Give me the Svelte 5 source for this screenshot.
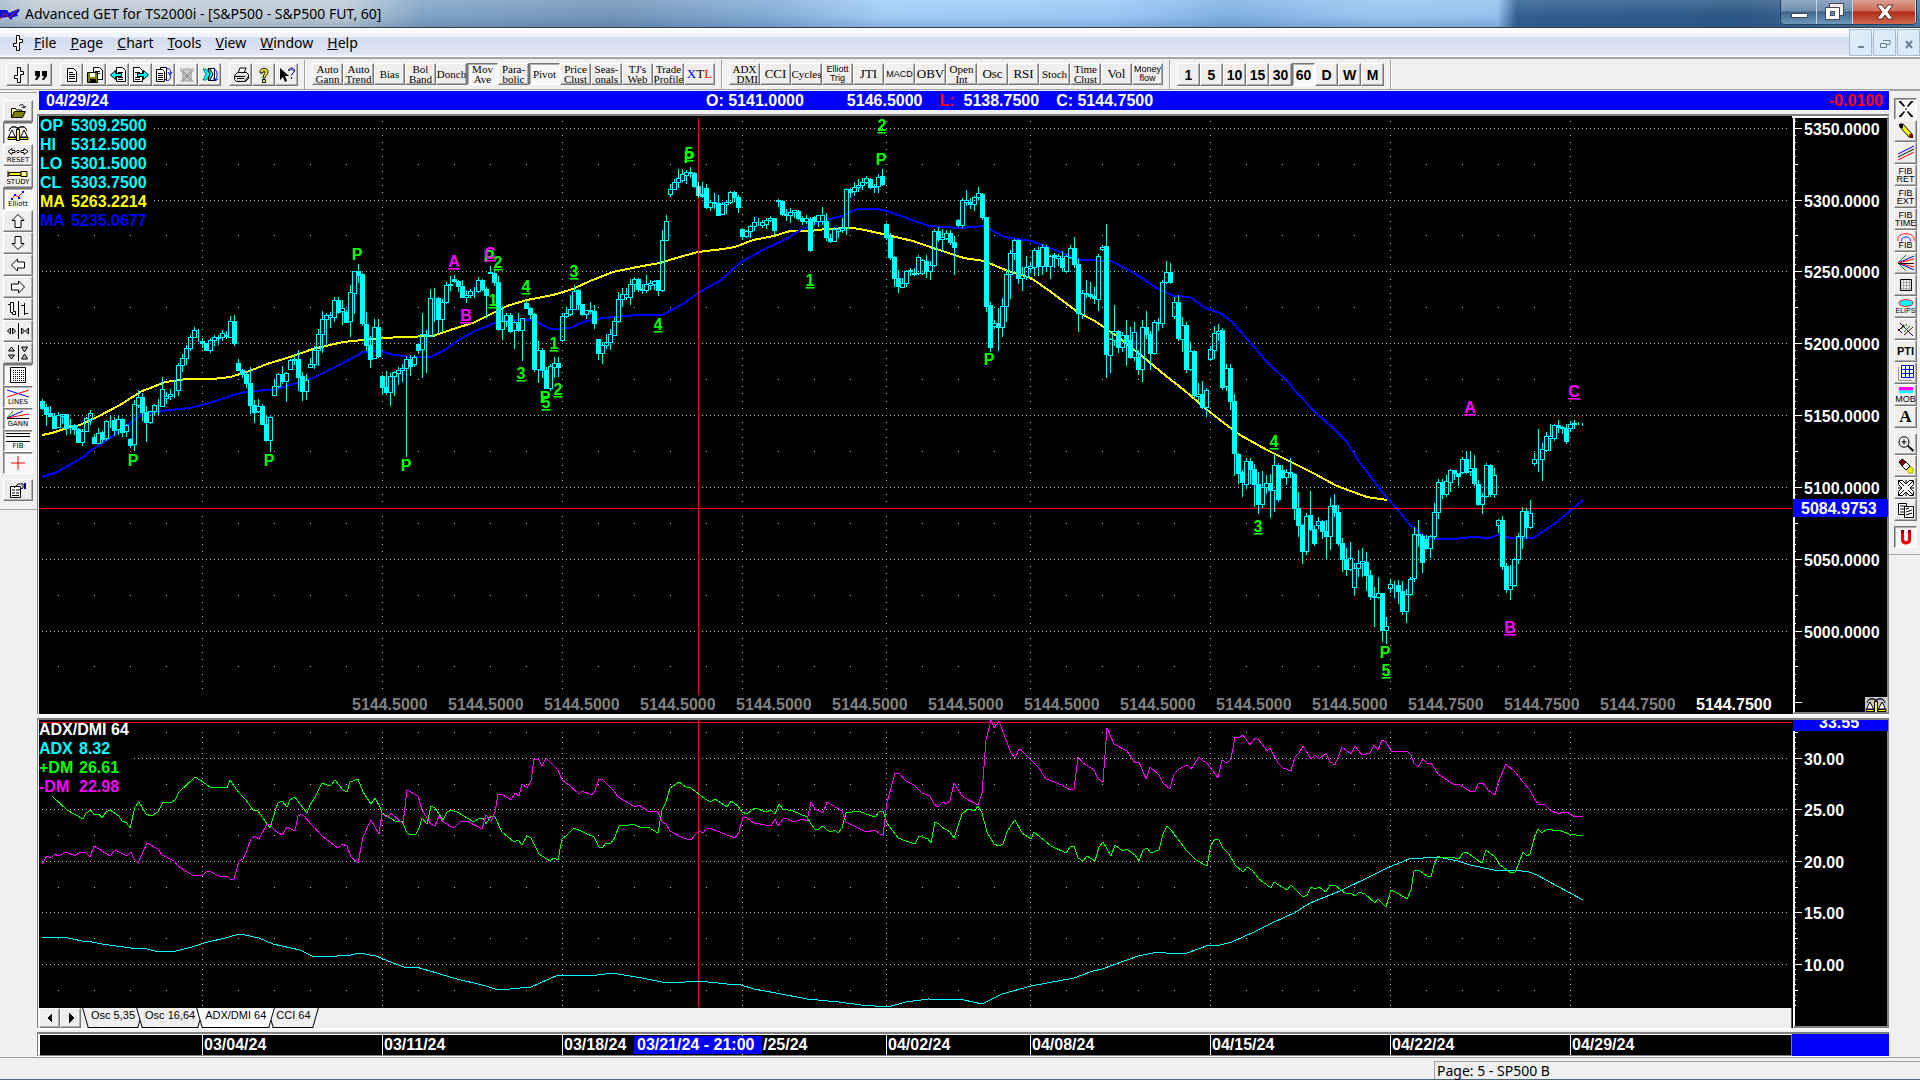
<script lang="ts">
  type Shape = [d: string, fill?: string, stroke?: string];
  type Tool = { id: string; text?: string; icon?: string; pressed?: boolean; sans?: boolean };

  const menus = ['File', 'Page', 'Chart', 'Tools', 'View', 'Window', 'Help'];

  const fileTools: Tool[][] = [
    [{ id: 'Bars', icon: 'bars' }, { id: 'Quotes', icon: 'quote' }],
    [
      { id: 'New page', icon: 'doc' },
      { id: 'Save page', icon: 'save' },
      { id: 'Previous page', icon: 'prev' },
      { id: 'Next page', icon: 'next' },
      { id: 'Cycle pages', icon: 'cycle' },
      { id: 'Delete page', icon: 'remove' },
      { id: 'Refresh pages', icon: 'refresh' }
    ],
    [{ id: 'Print', icon: 'print' }, { id: 'About', icon: 'about' }, { id: 'Context help', icon: 'pointer' }]
  ];

  const studies: Tool[] = [
    { id: 'Auto Gann', text: 'Auto\nGann' },
    { id: 'Auto Trend', text: 'Auto\nTrend' },
    { id: 'Bias', text: 'Bias' },
    { id: 'Bol Band', text: 'Bol\nBand' },
    { id: 'Donch', text: 'Donch' },
    { id: 'Mov Ave', text: 'Mov\nAve', pressed: true },
    { id: 'Parabolic', text: 'Para-\nbolic' },
    { id: 'Pivot', text: 'Pivot', pressed: true },
    { id: 'Price Clust', text: 'Price\nClust' },
    { id: 'Seasonals', text: 'Seas-\nonals' },
    { id: 'TJs Web', text: "TJ's\nWeb" },
    { id: 'Trade Profile', text: 'Trade\nProfile' },
    { id: 'XTL', text: 'XTL' }
  ];

  const indicators: Tool[] = [
    { id: 'ADX DMI', text: 'ADX\n  DMI' },
    { id: 'CCI', text: 'CCI' },
    { id: 'Cycles', text: 'Cycles' },
    { id: 'Elliott Trig', text: 'Elliott\nTrig', sans: true },
    { id: 'JTI', text: 'JTI' },
    { id: 'MACD', text: 'MACD', sans: true },
    { id: 'OBV', text: 'OBV' },
    { id: 'Open Int', text: 'Open\nInt' },
    { id: 'Osc', text: 'Osc' },
    { id: 'RSI', text: 'RSI' },
    { id: 'Stoch', text: 'Stoch' },
    { id: 'Time Clust', text: 'Time\nClust' },
    { id: 'Vol', text: 'Vol' },
    { id: 'Money flow', text: 'Money\nflow', sans: true }
  ];

  const periods = ['1', '5', '10', '15', '30', '60', 'D', 'W', 'M'];

  const leftTools: Tool[] = [
    { id: 'Open', icon: 'open' },
    { id: 'Scales', icon: 'scales', pressed: true },
    { id: 'Reset', icon: 'reset', text: 'RESET' },
    { id: 'Study', icon: 'study', text: 'STUDY' },
    { id: 'Elliott', icon: 'elliott', text: 'Elliott', pressed: true },
    { id: 'Up', icon: 'up' },
    { id: 'Down', icon: 'down' },
    { id: 'Left', icon: 'left' },
    { id: 'Right', icon: 'right' },
    { id: 'Bar style', icon: 'barstyle' },
    { id: 'Stretch time', icon: 'stretch' },
    { id: 'Stretch price', icon: 'squash' },
    { id: 'Grid', icon: 'dots', pressed: true },
    { id: 'Lines', icon: 'lines', text: 'LINES', pressed: true },
    { id: 'Gann', icon: 'gann', text: 'GANN', pressed: true },
    { id: 'Fib', icon: 'fib', text: 'FIB', pressed: true },
    { id: 'Crosshair', icon: 'cross', pressed: true },
    { id: 'Properties', icon: 'props' }
  ];

  const rightTools: Tool[][] = [
    [
      { id: 'Cursor', icon: 'x', pressed: true },
      { id: 'Pencil', icon: 'pencil' },
      { id: 'Channels', icon: 'channel' },
      { id: 'Fib retracement', text: 'FIB\nRET' },
      { id: 'Fib extension', text: 'FIB\nEXT' },
      { id: 'Fib time', text: 'FIB\nTIME' },
      { id: 'Fib arcs', icon: 'arcs', text: 'FIB' },
      { id: 'Gann fan', icon: 'fan' },
      { id: 'Gann box', icon: 'box' },
      { id: 'Ellipse', icon: 'ellipse', text: 'ELIPS' },
      { id: 'Pitchfork', icon: 'fork' },
      { id: 'PTI', text: 'PTI' },
      { id: 'Blue grid', icon: 'bluegrid' },
      { id: 'MOB', icon: 'mob', text: 'MOB' },
      { id: 'Text', text: 'A' }
    ],
    [
      { id: 'Zoom', icon: 'zoom' },
      { id: 'Eraser', icon: 'eraser' },
      { id: 'Erase all', icon: 'eraseall' },
      { id: 'Copy', icon: 'copy' }
    ],
    [{ id: 'Magnet', icon: 'magnet', pressed: true }]
  ];

  const K = '#000';
  const N = 'none';
  const page = 'M3.5 1.5h6l3 3v10h-9z';
  const dotRow = 'h1m1 0'.repeat(6);
  // shapes on a 16 x 16 box, or 26 x 9 where the button also has a caption
  const icons: Record<string, Shape[]> = {
    bars: [['M7.5 .5h3v4h3v3h-3v8h-3v-4h-3v-3h3z', '#fff', K]],
    quote: [['M2 4h5v5l-3 4H2l2-4H2zM9 4h5v5l-3 4H9l2-4H9z', K]],
    doc: [[page, '#fff', K], ['M5 5.5h4M5 7.5h6M5 9.5h6M5 11.5h6', N, K]],
    save: [['M6.5 .5h6l3 3v9h-9z', '#fff', K], ['M8 4.5h5M8 6.5h5', N, K], ['M.5 5.5h10v10H.5z', '#808000', K], ['M3 6h5v4H3z', '#fff'], ['M3 12h6v3H3z', K]],
    prev: [['M6.5 .5h6l3 3v11h-9z', '#fff', K], ['M8 5.5h5M8 10.5h5M8 12.5h5', N, K], ['M.5 8l5-4.500v3h6v3h-6v3z', '#0ff', K]],
    next: [['M.5 .5h6l3 3v11h-9z', '#fff', K], ['M2 5.5h5M2 10.5h5M2 12.5h5', N, K], ['M15.500 8l-5-4.500v3h-6v3h6v3z', '#0ff', K]],
    cycle: [['M4.500 .5h6v12h-6z', '#fff', K], ['M.5 2.500h6l2 2v10h-8z', '#fff', K], ['M2 6.500h5M2 8.500h5M2 10.500h5M2 12.500h5', N, K], ['M11 1.500c4 0 4 3 3 6 1 5 0 6-4 6M12 5l2 3 2-3', N, '#00f']],
    remove: [['M4 2h8v12H4z', '#ccc', '#999'], ['M1 1l14 14M15 1L1 15M1 3l12 12M15 3L3 15', N, '#999']],
    refresh: [['M6.500 1.500h6v12h-6z', '#fff', K], ['M1 2h3l4 5-4 6H1l3-6z', '#0ff', '#008080'], ['M6 2h2l3 5-3 6H6l2-6z', '#0ff', K], ['M12 1.500c4 3 4 8 1 12M11 11l2 3 3-2', N, '#00f']],
    print: [['M5 6l2-5h6l-2 5z', '#fff', K], ['M1.500 8.500l3-3h9l2 2v4l-3 3h-9l-2-2z', '#ddd', K], ['M2 9.500h10M4 11.500h7M12 14l3-4', N, K]],
    about: [['M4 5c0-5 8-5 8 0 0 3-3 3-3 6H7c0-3 2-4 2-6 0-2-2-2-2 0v1H4zM6.500 12.500h3v3h-3z', '#ff0', K]],
    pointer: [['M1 1v12l3-3 2 5 2-1-2-5h4z', K], ['M9.500 4c0-4 6-4 6 0 0 2-3 2-3 4.500M12.500 10v2M10.500 4c0-2 4-2 4 0', N, '#000080']],
    open: [['M1.500 14V5.500h4l1 1.500h5v2', '#ff8', K], ['M1.500 14.500l3-6h11l-3 6z', '#808000', K], ['M9 3c2-2 4-2 5 0v2M12 4l2 1 2-2', N, K]],
    scales: [['M-1 6c1-5 6-5 9-2 3-3 8-3 9 2M0 4c2-3 5-3 8-1 3-2 6-2 8 1', N, K], ['M6.500 4.500h3v11h-3z', '#ff0', K], ['M2 5l-3.500 7h7zM14 5l-3.500 7h7z', '#fff', K], ['M-2 12.500h8v2h-8zM10 12.500h8v2h-8z', '#ff0', K]],
    reset: [['M3 4.500l4-3v2h3v2H7v2zM23 4.500l-4-3v2h-3v2h3v2z', '#fff', K], ['M11.500 4.500l1.500-1.500 1.500 1.500L13 6z', '#fff', K]],
    study: [['M4 3.500h12v3H4z', '#ff0', K], ['M16 2.500h6v5h-6zM3 2v6', '#ff8', K]],
    elliott: [['M7 8l3-4 3 2 5-5', N, '#f00'], ['M6 7h2v2H6zM9 3h2v2H9zM13 6h2v2h-2zM17 0h2v2h-2z', '#00f']],
    up: [['M8 1.500l6 6h-3v7H5v-7H2z', '#fff', K]],
    down: [['M8 14.500l6-6h-3v-7H5v7H2z', '#fff', K]],
    left: [['M1.500 8l6-6v3h7v6h-7v3z', '#fff', K]],
    right: [['M14.500 8l-6-6v3h-7v6h7v3z', '#fff', K]],
    barstyle: [['M-1.500 3.500h2v-2h3v9h2v3h-3v-2h-2v-7z', '#fff', K], ['M8.500 0v16M14.500 2v12M11 4.500h3M15 12.500h3', N, K]],
    stretch: [['M8.500 0v16', N, K], ['M-2.500 8l3-3v6zM5.500 8l-3-3v6zM11.500 5l3 3-3 3zM18.500 5l-3 3 3 3z', '#bbb', K]],
    squash: [['M8.500 0v16', N, K], ['M-1.500 6l3-4 3 4zM-1.500 10l3 4 3-4zM11.500 2h6l-3 5zM11.500 14h6l-3-5z', '#bbb', K]],
    dots: [['M.5 .5h15v15H.5z', '#fff', K], [[3, 5, 7, 9, 11, 13].map((y) => `M3 ${y}.5${dotRow}`).join(''), N, K]],
    lines: [['M2 1l22 7', N, '#00f'], ['M2 8L24 1', N, '#f00']],
    gann: [['M2 7L8 0', N, '#080'], ['M2 7L18 0', N, '#00f'], ['M2 7l22-4', N, '#f00'], ['M2 7.500h22', N, K]],
    fib: [['M1 .5h24M1 3.500h24M1 8.500h24', N, K]],
    cross: [['M8 1v14M1 8h14', N, '#f00']],
    props: [['M.5 4.500h10v11H.5z', '#fff', K], ['M2 8h3M2 11h3M6 8h3M6 11h3M2 13.500h7M4 6l4-4h5v4l-4 2', N, K], ['M14 1h2v6h-2z', '#000080']],
    x: [['M1 0h2l4 5-1 1-5-5zM15 0h-2L9 5l1 1 5-5zM1 16h2l4-5-1-1-5 5zM15 16h-2l-4-5 1-1 5 5zM7 7.500h2v1H7z', K]],
    pencil: [['M2 1h3l9 10v3h-3L2 4z', '#ff0', K], ['M1 1h4v4H2z', K], ['M11 11h4v4h-3z', '#800000']],
    channel: [['M0 9L16 1', N, '#00f'], ['M0 12L16 4', N, K], ['M0 15L16 7', N, '#f00']],
    arcs: [['M4 9c-3-11 21-11 18 0', N, '#f00'], ['M8 9c-1-6 11-6 10 0', N, '#00f']],
    fan: [['M0 8L8 0M0 8l8 8', N, '#080'], ['M0 8L16 1M0 8l16 7', N, '#00f'], ['M0 8l16-4M0 8l16 4', N, '#f00'], ['M0 8.500h16', N, K]],
    box: [['M2.500 2.500h11v11h-11z', '#eee', K], ['M5.500 3v10M8.500 3v10M11.500 3v10M3 5.500h10M3 8.500h10M3 11.500h10', N, '#aaa']],
    ellipse: [['M5 4.500c0-5 16-5 16 0s-16 5-16 0', '#0ff', '#f00']],
    fork: [['M2 2l13 13M0 8l4 4', N, '#000080'], ['M3 8l6-5M6 11l6-6', N, '#080'], ['M0 10l6-6M6 14l9-8', N, '#800000']],
    bluegrid: [['M3.500 .5h12v12h-12zM7.500 1v12M11.500 1v12M3 4.500h12M3 8.500h12', '#fff', '#00f'], ['M.5 2v13.500H14', N, '#999']],
    mob: [['M5 0h16v4H5z', '#f0f'], ['M5 4h16v3H5z', '#0ff']],
    zoom: [['M1 6c0-7 10-7 10 0s-10 7-10 0M3.500 6h5M6 3.500v5', N, K], ['M9 10l1-1 6 5-1 2z', K]],
    eraser: [['M1 4l3-3 4 3-4 4z', '#800000', K], ['M4 8l4-4 4 4-4 4z', '#fff', K], ['M9 12l4-4 2 3v4h-4z', '#ff0', '#aa0']],
    eraseall: [['M.5 .5h4l3.500 3.500 3.500-3.500h4v4L12 8l3.500 3.500v4h-4L8 12l-3.500 3.500h-4v-4L4 8 .5 4.500z', '#fff', K], ['M1 1l5 5M15 1l-5 5M1 15l5-5M15 15l-5-5M0 8h3M13 8h3M8 0v3M8 13v3', N, K]],
    copy: [['M.5 1.500h8v11h-8z', '#fff', K], ['M2 4h5M2 7h4M2 10h4', N, K], ['M6.500 4.500h9v11h-9z', '#fff', K], ['M8 7l3-1M8 10l6-2M8 13l6-2', N, K]],
    magnet: [['M3 1h3v9c0 3 4 3 4 0V1h3v10c0 6-10 6-10 0z', '#e00'], ['M3 1h3v3H3zM10 1h3v3h-3z', '#800000']]
  };

  const ohlc = [
    ['OP', '5309.2500', 'cyan'],
    ['HI', '5312.5000', 'cyan'],
    ['LO', '5301.5000', 'cyan'],
    ['CL', '5303.7500', 'cyan'],
    ['MA', '5263.2214', 'yellow'],
    ['MA', '5235.0677', 'blue']
  ];

  const tape = [...Array(11).fill('5144.5000'), ...Array(4).fill('5144.7500')];

  // high, open, close, low as screen rows, one bar every 4px
  const bars = `
    399,401,408,409 404,407,414,425 406,413,416,416 413,416,428,428 412,427,415,427 414,416,414,423 414,414,428,434
    419,427,425,433 424,425,429,434 428,429,442,442 429,442,431,445 417,431,418,431 410,419,413,424 434,437,443,443
    428,443,433,443 431,432,439,442 420,438,421,440 415,421,421,427 417,420,430,435 415,429,419,434 418,419,432,436
    424,431,425,436 438,439,445,447 400,444,404,450 390,405,397,407 393,397,412,420 406,412,422,441 411,422,411,423
    404,411,405,414 399,405,405,414 377,406,389,406 392,398,396,403 389,396,394,399 380,394,394,397 363,390,365,395
    354,365,358,371 345,358,348,364 335,348,337,350 327,337,330,337 329,330,330,341 338,341,343,347 343,343,350,350
    338,350,340,352 335,340,337,345 335,338,337,344 330,337,333,340 331,336,335,338 316,337,321,337 315,321,343,345
    359,363,370,370 369,370,374,377 372,374,383,387 367,383,405,413 400,405,412,422 399,411,406,412 404,406,424,424
    415,424,440,441 415,440,417,451 380,395,386,395 373,386,374,387 366,374,381,383 372,381,373,401 359,369,360,369
    355,360,359,364 350,359,377,390 372,376,391,400 374,391,380,399 358,367,364,367 346,364,350,368 329,350,334,365
    311,334,319,352 313,319,315,345 312,317,315,327 297,317,300,321 297,300,312,313 300,311,308,324 310,312,322,322
    285,321,292,336 271,293,271,313 264,271,275,282 273,274,323,325 312,324,345,350 336,345,359,367 319,358,327,358
    319,327,356,357 375,376,387,394 371,387,392,394 373,392,376,405 371,376,372,395 367,373,370,384 364,370,368,381
    356,368,359,456 355,359,366,375 355,364,357,366 343,344,350,353 313,349,334,377 330,335,334,372 289,336,298,336
    288,298,298,321 297,298,319,332 299,319,302,331 282,302,285,303 276,285,284,290 275,279,281,282 280,281,286,291
    280,286,297,297 291,297,295,302 289,295,291,297 287,291,291,297 277,291,280,292 279,280,289,290 287,289,295,317
    266,272,273,273 269,273,282,285 276,282,329,330 306,329,321,339 313,321,315,326 313,315,331,332 321,330,322,348
    313,322,330,331 318,330,318,360 300,303,308,308 307,308,314,318 313,314,369,371 341,369,350,382 348,350,370,377
    367,370,388,388 364,388,366,390 357,367,363,377 357,363,367,376 313,340,316,341 307,316,313,317 295,314,309,315
    285,309,291,309 289,290,304,309 304,304,314,315 310,314,310,318 302,311,310,313 305,311,323,328 339,339,353,359
    342,353,345,363 334,345,342,348 329,342,334,349 317,335,321,335 292,321,299,322 288,299,294,306 288,297,294,299
    279,297,284,304 277,284,279,291 278,279,289,291 284,290,289,293 275,290,284,292 280,285,283,289 280,284,281,289
    280,280,290,295 230,290,240,291 215,240,221,240 184,194,189,196 179,189,182,189 169,182,178,187 169,180,174,181
    170,175,172,183 167,173,172,177 172,173,186,187 182,186,195,197 182,194,196,197 184,188,207,208 200,207,202,210
    193,202,203,208 195,203,215,215 202,214,204,214 200,204,202,213 191,202,192,203 191,192,197,201 195,197,207,212
    228,229,236,239 230,236,231,237 225,231,226,237 217,226,222,230 218,222,222,225 220,225,222,227 218,224,220,228
    216,220,218,221 218,218,230,234 199,200,201,206 200,201,214,215 209,215,214,220 208,215,212,222 210,212,210,217
    210,211,218,219 216,218,221,224 215,221,218,223 217,219,250,251 216,217,221,224 215,221,215,226 207,221,215,224
    213,221,237,240 234,238,241,242 227,241,229,241 227,231,229,237 218,230,228,232 188,228,189,234 188,189,192,197
    182,191,187,195 179,187,185,191 178,185,182,189 176,182,178,183 178,179,187,188 184,187,186,192 174,186,177,192
    169,176,184,185 223,224,237,239 233,237,257,259 256,257,278,286 270,278,286,292 278,287,283,287 270,283,271,286
    268,271,270,275 268,274,273,275 255,273,257,274 259,273,260,274 255,261,271,277 261,271,265,279 229,265,231,266
    227,231,239,241 229,239,237,251 230,238,233,239 230,233,242,244 236,242,247,274 219,220,225,226 198,225,200,227
    190,202,200,205 198,202,204,208 196,204,197,210 187,197,193,199 193,194,217,219 217,217,306,311 302,305,347,351
    320,326,323,328 308,323,327,350 298,327,306,336 270,306,274,321 250,274,253,298 239,253,240,259 239,240,278,283
    267,278,274,290 256,276,267,279 262,268,266,272 248,267,250,275 247,250,266,275 244,266,247,274 245,247,266,271
    255,266,256,278 253,255,257,267 254,258,256,265 251,258,267,271 255,271,256,272 245,257,248,258 237,248,264,267
    259,264,313,331 290,314,293,318 280,293,294,297 282,294,296,298 287,296,298,303 254,299,256,310 245,249,247,250
    224,246,354,377 338,355,339,372 305,340,331,345 330,331,347,352 332,347,335,351 320,335,341,365 327,340,357,358
    322,357,332,360 350,357,369,374 320,369,327,381 311,327,334,338 331,334,353,369 320,353,322,354 318,323,322,330
    280,323,282,327 261,282,272,283 263,272,282,283 297,316,302,318 295,302,338,340 317,339,325,351 322,325,369,372
    342,369,351,370 350,351,395,398 383,396,394,401 381,394,407,408 388,407,390,416 346,359,349,360 326,350,333,358
    324,333,331,340 328,330,387,389 364,386,368,390 364,368,401,409 394,401,453,475 453,454,473,483 470,472,482,496
    458,484,461,488 458,461,469,483 464,469,484,506 472,484,504,513 471,504,487,507 475,487,483,493 474,483,490,517
    454,490,465,511 463,465,499,501 465,470,477,478 469,477,472,484 458,472,473,477 473,474,508,519 492,508,525,536
    524,525,551,563 513,551,516,554 491,515,529,530 525,529,543,545 517,525,521,528 520,521,531,538 520,531,536,558
    498,536,506,549 494,505,512,516 505,512,543,545 538,543,559,571 548,559,569,575 542,569,558,570 563,587,568,594
    550,568,563,576 548,563,561,576 552,562,575,590 570,575,596,599 587,597,596,626 577,597,593,598 593,593,630,641
    617,630,626,643 579,588,584,592 581,584,584,597 580,585,591,603 581,591,611,614 589,611,594,622 577,594,579,595
    527,578,534,581 520,535,534,546 534,536,562,572 535,539,548,549 535,548,536,557 503,536,512,538 479,512,482,518
    479,482,494,498 475,494,481,496 469,482,470,491 470,470,473,479 473,473,476,485 457,472,459,473 451,459,472,473
    451,471,468,475 455,468,483,485 480,484,504,505 493,504,496,513 463,496,465,497 464,465,494,496 468,494,475,497
    519,525,520,532 516,520,566,569 563,566,589,592 565,589,585,599 558,585,559,586 533,559,536,563 507,536,511,548
    508,511,527,538 500,527,513,528 453,463,459,465 429,459,459,471 443,459,449,480 432,450,436,451 424,438,436,450
    424,438,425,440 420,425,427,432 426,427,428,433 424,428,441,443 421,428,424,431 420,424,423,428 422,423,423,424
    423,423,423,425`
    .trim()
    .split(/\s+/)
    .map((row, i) => {
      const [high, open, close, low] = row.split(',').map(Number);
      return { x: 42 + 4 * i, high, low, top: Math.min(open, close), bottom: Math.max(open, close), down: close > open };
    });

  const slowMa =
    '42,435 52,433 67,428 80,425 97,417 120,405 142,391 153,387 165,382 187,379 213,379 230,377 247,372 267,364 290,357 313,349 343,342 363,340 383,338 403,337 433,336 453,329 473,323 487,316 507,306 527,300 553,295 573,289 590,281 613,272 637,267 660,263 676,258 698,252 723,249 735,247 753,240 774,236 790,231 810,231 826,229 853,228 865,230 887,235 913,241 933,248 964,258 984,261 1008,271 1031,278 1051,292 1079,313 1095,321 1118,337 1142,356 1166,376 1184,390 1205,408 1220,420 1240,435 1267,450 1297,465 1313,473 1337,486 1367,497 1387,500';
  const fastMa =
    '42,477 57,472 73,463 85,456 90,451 110,438 130,423 140,415 160,411 190,408 213,402 233,395 250,391 273,390 290,385 313,378 343,363 363,352 380,351 390,354 410,357 430,357 443,351 460,339 477,330 488,326 497,322 510,320 533,320 550,329 570,328 583,322 603,318 637,315 662,315 683,304 698,293 721,280 741,262 763,250 786,239 802,229 826,220 842,216 857,209 877,209 887,211 909,219 929,226 960,228 984,226 1004,237 1031,241 1063,253 1081,260 1111,261 1134,273 1158,289 1174,296 1190,297 1205,308 1222,314 1233,323 1267,362 1290,384 1295,391 1317,414 1333,428 1347,442 1360,463 1387,498 1398,510 1410,525 1425,537 1433,539 1453,539 1472,537 1490,538 1497,535 1510,538 1533,538 1553,525 1570,511 1583,500';
  const plusDm =
    '52,796 67,810 83,819 86,813 91,810 94,815 99,814 102,818 106,812 110,810 119,816 122,821 127,823 130,828 135,807 139,802 146,814 151,816 158,812 163,802 171,803 175,800 179,792 195,777 200,780 210,787 219,788 222,787 227,788 230,780 239,793 246,800 253,810 258,811 270,828 276,808 278,803 282,801 287,807 290,800 295,797 307,813 310,805 314,799 322,783 327,785 331,785 335,780 343,790 347,792 350,782 358,779 363,792 371,804 375,798 380,807 382,813 395,821 402,821 407,833 411,835 416,834 419,828 422,818 427,824 431,806 435,808 443,820 447,812 451,810 457,812 474,822 479,818 483,818 486,824 491,816 495,817 502,832 514,842 518,840 522,845 527,836 531,838 539,854 550,861 554,858 558,860 562,839 567,835 574,828 594,837 599,847 602,848 606,843 611,843 615,837 619,826 623,825 627,826 631,824 635,825 642,828 648,827 658,833 662,810 666,802 670,788 679,782 686,787 691,788 705,799 711,802 715,799 727,807 731,801 738,806 742,812 747,814 755,808 766,812 771,810 775,814 779,804 783,809 793,811 807,817 811,824 815,829 819,829 823,826 827,830 831,832 835,830 838,833 842,828 846,813 859,811 866,814 875,817 879,812 883,811 887,823 898,838 906,841 915,844 919,836 928,839 931,843 935,822 939,824 942,827 950,832 954,838 958,826 962,814 968,809 975,811 978,806 982,813 987,832 994,844 999,846 1003,844 1007,832 1011,825 1015,820 1022,833 1031,839 1034,832 1051,846 1066,853 1070,847 1074,846 1078,858 1083,861 1087,856 1095,861 1099,847 1103,842 1111,856 1115,845 1123,851 1127,849 1135,855 1139,861 1143,850 1147,848 1151,853 1159,850 1163,834 1167,826 1171,830 1187,851 1196,860 1207,866 1211,845 1215,839 1219,840 1223,848 1229,854 1235,865 1243,872 1247,867 1252,870 1259,879 1271,888 1274,882 1279,885 1287,890 1291,885 1303,897 1307,895 1311,887 1315,889 1319,887 1326,892 1330,885 1335,885 1346,894 1351,893 1355,896 1359,892 1365,894 1375,903 1378,899 1386,907 1391,890 1399,894 1407,899 1411,890 1414,871 1419,870 1427,876 1431,877 1434,865 1438,856 1442,858 1451,857 1459,859 1463,853 1466,852 1482,863 1486,850 1495,857 1500,865 1511,873 1515,872 1519,863 1523,852 1527,856 1530,854 1535,836 1538,829 1542,833 1546,830 1550,829 1555,831 1559,830 1569,834 1583,836';
  const minusDm =
    '42,864 47,856 51,858 55,854 58,856 66,852 75,856 80,852 85,852 90,857 94,846 110,856 115,850 127,856 131,852 134,859 138,863 147,843 158,849 162,855 174,861 178,866 187,872 195,876 203,875 207,871 211,872 219,876 227,876 231,880 234,879 239,861 243,859 246,853 251,839 255,836 259,839 267,824 271,825 274,830 282,835 287,827 295,831 298,816 302,814 322,836 338,848 342,844 347,846 351,857 358,863 363,837 371,820 379,834 382,814 387,817 391,813 403,824 407,790 418,796 422,810 431,824 435,826 439,816 443,822 454,828 461,821 467,821 482,829 486,815 491,821 495,812 498,794 503,795 511,800 515,793 519,796 522,784 527,788 531,781 534,759 539,760 542,766 546,758 558,770 562,780 569,785 579,794 582,791 591,795 594,793 599,779 603,780 614,791 618,797 635,807 639,805 648,811 658,812 662,822 666,824 670,831 683,838 691,840 695,835 699,831 703,833 707,828 712,829 735,838 739,832 743,817 747,818 754,823 771,826 775,819 778,826 783,819 786,818 794,822 803,819 807,821 811,802 815,809 823,813 827,802 842,811 846,822 854,826 866,832 875,830 883,836 887,802 891,788 895,773 899,773 906,781 914,785 922,793 930,796 934,804 938,807 943,802 946,804 950,801 954,783 963,797 978,805 982,793 986,740 991,720 994,728 999,721 1011,753 1015,758 1019,749 1022,751 1039,768 1046,779 1062,785 1070,790 1074,789 1078,757 1083,763 1094,770 1098,779 1103,782 1107,728 1114,744 1127,751 1135,763 1139,762 1146,779 1150,767 1159,775 1163,783 1170,789 1174,774 1179,769 1187,765 1191,769 1199,757 1203,761 1207,763 1218,778 1222,760 1227,763 1231,759 1235,737 1239,738 1243,735 1250,745 1255,738 1259,740 1267,751 1270,748 1278,763 1283,768 1291,771 1295,757 1299,753 1303,746 1311,759 1315,755 1319,759 1326,753 1330,762 1335,765 1342,747 1351,754 1355,746 1362,755 1370,753 1374,745 1378,750 1382,740 1386,742 1391,751 1407,751 1411,755 1414,763 1418,767 1423,759 1427,763 1431,763 1438,774 1453,784 1460,785 1471,792 1475,791 1478,784 1483,783 1488,790 1495,795 1498,783 1506,764 1515,772 1523,782 1530,790 1534,798 1538,804 1544,804 1550,810 1559,814 1562,812 1567,812 1573,816 1583,816';
  const adx =
    '42,937 63,937 73,939 82,941 92,942 102,944 116,946 131,948 147,949 155,951 176,951 192,947 204,943 229,937 239,934 245,935 259,938 273,944 300,950 312,956 337,956 351,955 359,953 376,956 388,961 404,967 416,967 437,973 453,978 486,986 495,989 510,989 531,987 558,975 590,976 612,973 642,978 662,982 685,982 699,981 727,984 741,985 754,989 776,993 807,999 839,1002 861,1005 888,1007 906,1002 928,999 964,1000 982,1004 1002,994 1031,986 1074,978 1093,971 1102,969 1138,956 1158,952 1174,954 1187,953 1209,945 1220,945 1232,942 1254,932 1272,923 1294,913 1310,903 1340,891 1371,876 1387,868 1409,859 1438,857 1458,861 1470,865 1494,870 1515,870 1529,872 1537,875 1557,886 1583,900';

  // pivots (P), wave counts and corrective letters
  const marks: [string, number, number][] = [
    ['P', 133, 466], ['P', 269, 466], ['P', 357, 260], ['P', 406, 471], ['A', 454, 267], ['B', 466, 321],
    ['P', 489, 262], ['C', 490, 259], ['2', 498, 268], ['1', 493, 306], ['4', 526, 292], ['3', 574, 277],
    ['3', 521, 379], ['1', 554, 349], ['2', 558, 395], ['P', 545, 403], ['5', 546, 408], ['4', 658, 330],
    ['5', 689, 159], ['P', 689, 163], ['2', 882, 131], ['P', 881, 165], ['1', 810, 286], ['P', 989, 365],
    ['4', 1274, 447], ['3', 1258, 532], ['P', 1385, 658], ['5', 1386, 676], ['A', 1470, 413], ['C', 1574, 397],
    ['B', 1510, 633]
  ];

  const weeks: [number, string][] = [
    [202, '03/04/24'], [382, '03/11/24'], [562, '03/18/24'], [742, ''], [886, '04/02/24'], [1030, '04/08/24'],
    [1210, '04/15/24'], [1390, '04/22/24'], [1570, '04/29/24']
  ];

  const prices = [5350, 5300, 5250, 5200, 5150, 5100, 5050, 5000];
  const levels = [30, 25, 20, 15, 10];
  const priceY = (p: number) => Math.round(127.7 + (5350 - p) * 1.4366);
  const levelY = (v: number) => Math.floor(758.3 + (30 - v) * 10.3);

  const priceTicks = Array.from({ length: 82 }, (_, k) => ({ k: k - 1, y: priceY(5355 - k * 5) }));
  const levelTicks = Array.from({ length: 54 }, (_, k) => ({ k: k - 5, y: levelY(32.5 - k * 0.5) }));

  function dots(ticks: { k: number; y: number }[], last: number) {
    let d = '';
    for (const { k, y } of ticks) {
      if (y > last) continue;
      for (const [x] of weeks) d += `M${x} ${y}.5h1`;
      if (k % 5 === 0 && k % 10 !== 0) {
        for (let x = 58; x < 1570; x += 36) d += `M${x} ${y}.5h1`;
      }
    }
    return d;
  }

  const tickLength = (k: number) => (k % 10 === 0 ? 8 : k % 5 === 0 ? 4 : 2);

  const tabs = ['Osc 5,35', 'Osc 16,64', 'ADX/DMI 64', 'CCI 64'];
  let activeTab = $state('ADX/DMI 64');
  let period = $state('60');
</script>

{#snippet glyph(name: string, wide = false)}
  <svg class="glyph" class:wide viewBox={wide ? '0 0 26 9' : '0 0 16 16'} aria-hidden="true">
    {#each icons[name] as [d, fill, stroke]}
      <path {d} fill={fill ?? 'none'} stroke={stroke ?? 'none'} />
    {/each}
  </svg>
{/snippet}

{#snippet study(tool: Tool)}
  <button class="tool study" class:pressed={tool.pressed} class:sans={tool.sans} aria-label={tool.id}>
    {#if tool.id === 'XTL'}
      <span class="short"><i class="b">X</i>T<i class="r">L</i></span>
    {:else}
      <span class:short={tool.text!.length < 4}>{tool.text}</span>
    {/if}
  </button>
{/snippet}

<div class="app">
  <header class="title">
    <svg class="logo" viewBox="0 0 20 16" aria-hidden="true">
      <path d="M0 4h7l2 3 9-4 2 1-3 4 1 2-5 1-2 3-3-3-8 1z" fill="#1010d0" />
      <path d="M0 13l5-6 4 5 9-9" fill="none" stroke="#c02040" />
    </svg>
    <h1>Advanced GET for TS2000i - [S&amp;P500 - S&amp;P500 FUT, 60]</h1>
    <div class="window-buttons">
      <button aria-label="Minimize"><svg viewBox="0 0 36 24"><path d="M10.500 13.500h16v4h-16z" fill="#fff" stroke="#445" /></svg></button>
      <button aria-label="Restore"><svg viewBox="0 0 36 24"><path d="M12.500 3.500h14v12h-14z" fill="#eee" stroke="#445" /><path d="M8.500 7.500h14v12h-14z" fill="#fff" stroke="#445" /><path d="M13.500 11.500h4v4h-4z" fill="#6a92ba" stroke="#445" /></svg></button>
      <button class="close" aria-label="Close"><svg viewBox="0 0 36 24"><path d="M10 5h5l3 4 3-4h5l-5 7 5 7h-5l-3-4-3 4h-5l5-7z" fill="#fff" stroke="#533" /></svg></button>
    </div>
  </header>

  <nav class="menu">
    {@render glyph('bars')}
    {#each menus as item}
      <button><u>{item[0]}</u>{item.slice(1)}</button>
    {/each}
    <div class="child-buttons">
      <button aria-label="Minimize chart"><svg viewBox="0 0 16 16"><path d="M5 10h6v2H5z" fill="#6a8098" /></svg></button>
      <button aria-label="Restore chart"><svg viewBox="0 0 16 16"><path d="M6 4.500h7v4h-3M3.500 7.500h6v4h-6z" fill="none" stroke="#6a8098" /></svg></button>
      <button aria-label="Close chart"><svg viewBox="0 0 16 16"><path d="M5 5l6 7M11 5l-6 7" stroke="#6a8098" stroke-width="2" /></svg></button>
    </div>
  </nav>

  <div class="toolbar">
    {#each fileTools as group}
      <div class="group">
        {#each group as tool}
          <button class="tool square" aria-label={tool.id}>{@render glyph(tool.icon!)}</button>
        {/each}
      </div>
    {/each}
    <div class="rule"></div>
    <div class="group">{#each studies as tool}{@render study(tool)}{/each}</div>
    <div class="rule"></div>
    <div class="group">{#each indicators as tool}{@render study(tool)}{/each}</div>
    <div class="rule"></div>
    <div class="group">
      {#each periods as p}
        <button class="tool square period" class:pressed={period === p} onclick={() => (period = p)}>{p}</button>
      {/each}
    </div>
    <div class="rule"></div>
  </div>

  <div class="body">
    <aside class="left">
      {#each leftTools as tool}
        <button class="tool side" class:pressed={tool.pressed} aria-label={tool.id}>
          {@render glyph(tool.icon!, !!tool.text)}
          {#if tool.text}<span>{tool.text}</span>{/if}
        </button>
      {/each}
    </aside>

    <main>
      <div class="quote">
        <span class="date">04/29/24</span>
        <span>O: 5141.0000</span>
        <span class="high">5146.5000</span>
        <span><b>L:</b>&nbsp; 5138.7500</span>
        <span>C: 5144.7500</span>
        <b class="change">-0.0100</b>
      </div>

      <section class="pane">
        <div class="plot">
          <svg class="price" role="img" aria-label="S&P500 60 minute chart">
            <g transform="translate(-39 -116)">
              {#each prices as p}
                <line class="dotted" x1="42" x2="1788" y1={priceY(p) + 0.5} y2={priceY(p) + 0.5} />
              {/each}
              <path class="dot" d={dots(priceTicks, 690)} />
              <polyline points={slowMa} stroke="#ff0" stroke-width="2" />
              <polyline points={fastMa} stroke="#00f" stroke-width="2" />
              <path d="M39 508.500H1792M698.500 118V695" stroke="#f00" />
              {#each bars as b}
                <path d="M{b.x + 0.5} {b.high}V{b.top}M{b.x + 0.5} {b.bottom}V{b.low + 1}" stroke="#0ff" />
                <rect x={b.x - 1.5} y={b.top + 0.5} width="4" height={b.bottom - b.top} stroke="#0ff" fill={b.down ? '#0ff' : 'none'} />
                {#if b.x === 698}
                  <path d="M{b.x + 0.5} {b.high}V{b.low}" stroke="#fff" />
                {/if}
              {/each}
              {#each marks as [text, x, y]}
                <text {x} {y} class="mark" class:wave={text !== 'P'} class:letter={/[ABC]/.test(text)}>{text}</text>
              {/each}
            </g>
          </svg>
          <div class="legend">
            {#each ohlc as [name, value, color]}
              <div class={color}><span>{name}</span>{value}</div>
            {/each}
          </div>
          <div class="tape">
            {#each tape as value}<span>{value}</span>{/each}
          </div>
        </div>
        <div class="scale">
          <svg class="price">
            <g transform="translate(-1792 -116)">
              <path d="M1792 117H1889M1794 116V714" stroke="#fff" stroke-width="2" />
              <path d="M1888 117V714M1794 713H1889" stroke="#808080" stroke-width="2" />
              {#each priceTicks as { k, y }}
                <path d="M1794 {y}.5h{tickLength(k)}" stroke="#fff" />
              {/each}
              {#each prices as p}
                <text x="1804" y={priceY(p) + 7}>{p}.0000</text>
              {/each}
              <rect class="flag" x="1793" y="499" width="95" height="18" />
              <text x="1801" y="514">5084.9753</text>
            </g>
          </svg>
          <button class="corner" aria-label="Scale">{@render glyph('scales')}</button>
        </div>
      </section>

      <section class="pane">
        <div class="plot">
          <svg class="study-plot" role="img" aria-label="ADX/DMI 64">
            <g transform="translate(-39 -720)">
              {#each levels as v}
                <line class="dotted" x1="42" x2="1788" y1={levelY(v) + 0.5} y2={levelY(v) + 0.5} />
              {/each}
              <path class="dot" d={dots(levelTicks, 1006)} />
              <path d="M39 722.500H1792M698.500 720V1007" stroke="#f00" />
              <polyline points={adx} stroke="#0ff" />
              <polyline points={plusDm} stroke="#0f0" />
              <polyline points={minusDm} stroke="#f0f" />
            </g>
          </svg>
          <div class="legend narrow">
            <div>ADX/DMI 64</div>
            <div class="cyan"><span>ADX</span>8.32</div>
            <div class="green"><span>+DM</span>26.61</div>
            <div class="magenta"><span>-DM</span>22.98</div>
          </div>
          <div class="tabs">
            <button class="tool arrow" aria-label="Previous tab"><svg viewBox="0 0 8 10"><path d="M6 0v10L1 5z" /></svg></button>
            <button class="tool arrow" aria-label="Next tab"><svg viewBox="0 0 8 10"><path d="M2 0v10l5-5z" /></svg></button>
            {#each tabs as tab}
              <button class="tab" class:active={tab === activeTab} onclick={() => (activeTab = tab)}>{tab}</button>
            {/each}
          </div>
        </div>
        <div class="scale">
          <svg class="study-scale">
            <g transform="translate(-1792 -720)">
              <path d="M1794 720V1028" stroke="#fff" stroke-width="2" />
              <path d="M1888 720V1028M1794 1027H1889" stroke="#808080" stroke-width="2" />
              {#each levelTicks as { k, y }}
                <path d="M1794 {y}.5h{tickLength(k)}" stroke="#fff" />
              {/each}
              {#each levels as v}
                <text x="1804" y={levelY(v) + 7}>{v}.00</text>
              {/each}
              <rect class="flag" x="1793" y="718" width="95" height="13" />
              <text x="1819" y="728">33.55</text>
            </g>
          </svg>
        </div>
      </section>

      <section class="pane dates">
        <svg class="timeline">
          <g transform="translate(-40 -1035)">
            {#each weeks as [x, label]}
              <path d="M{x}.5 1034v22" stroke="#fff" />
              <text x={x + 2} y="1050">{label}</text>
            {/each}
            <text x="763" y="1050">/25/24</text>
            <rect class="flag" x="634" y="1036" width="128" height="18" />
            <text x="637" y="1050">03/21/24 - 21:00</text>
          </g>
        </svg>
        <div class="filler"></div>
      </section>
    </main>

    <aside class="right">
      {#each rightTools as group}
        <div>
          {#each group as tool}
            <button
              class="tool mini"
              class:pressed={tool.pressed}
              class:bold={tool.text === 'PTI'}
              class:serif={tool.text === 'A'}
              class:tiny={tool.text === 'ELIPS'}
              aria-label={tool.id}
            >
              {#if tool.icon}{@render glyph(tool.icon, !!tool.text)}{/if}
              {#if tool.text}<span>{tool.text}</span>{/if}
            </button>
          {/each}
        </div>
      {/each}
    </aside>
  </div>

  <footer><span>Page: 5 - SP500 B</span></footer>
</div>

<style>
  :global(body) {
    background: #f0f0f0;
  }

  .app {
    display: flex;
    flex-direction: column;
    min-height: 100vh;
    box-sizing: border-box;
    border-bottom: 1px solid #4a6878;
    font-family: 'Noto Sans', 'Open Sans', sans-serif;
    font-size: 14px;
    color: #000;
  }

  button {
    font: inherit;
    color: inherit;
    padding: 0;
    margin: 0;
    border: 0;
    background: none;
    cursor: default;
  }

  .title {
    display: flex;
    align-items: center;
    height: 28px;
    box-sizing: border-box;
    border-bottom: 1px solid #2e3f55;
    background:
      linear-gradient(rgba(255, 255, 255, 0.15), rgba(255, 255, 255, 0) 60%, rgba(40, 70, 110, 0.2)),
      linear-gradient(90deg, #a9bccd, #c0ccd6 2%, #bccad6 18%, #7fa3c6 22%, #7294b8 32%, #82abd6 40%, #a0ccf6 46%, #98c8f6 58%, #7eb0e2 64%, #98c6f2 72%, #92c0ee 78%, #2f5f91 79%, #2b5685 91%, #527ba4);
  }

  .logo {
    width: 20px;
    height: 16px;
  }

  h1 {
    flex: 1;
    margin: 0 0 0 5px;
    font-size: 14px;
    font-weight: 400;
    white-space: nowrap;
  }

  .window-buttons {
    display: flex;
    align-self: flex-start;
    height: 24px;
    margin-right: 3px;
    border: 1px solid #26405c;
    border-top: 0;
    border-radius: 0 0 5px 5px;
    overflow: hidden;
  }

  .window-buttons button {
    width: 36px;
    background: linear-gradient(#8fa9c3, #7090b0 45%, #3f658c 50%, #6f97be);
    box-shadow: inset -1px 0 #c5d5e5;
  }

  .window-buttons .close {
    width: 63px;
    background: linear-gradient(#dba090, #cc6a55 45%, #b02a18 50%, #d06a50);
  }

  .window-buttons svg {
    display: block;
    width: 36px;
    height: 24px;
    margin: auto;
  }

  .menu {
    display: flex;
    align-items: center;
    height: 30px;
    padding-left: 9px;
    box-sizing: border-box;
    border-bottom: 1px solid #a8aeb8;
    background: linear-gradient(#fff, #eef1f8 30%, #d4dbee 35%, #dfe5f4 90%, #fff);
  }

  .menu > button {
    margin-left: 14px;
    white-space: nowrap;
  }

  .menu > .glyph + button {
    margin-left: 9px;
  }

  .child-buttons {
    display: flex;
    gap: 1px;
    margin-left: auto;
  }

  .child-buttons button {
    width: 23px;
    height: 27px;
    border: 1px solid #a9bdd0;
    background: #dcebf8;
  }

  .child-buttons svg {
    width: 16px;
    height: 16px;
    vertical-align: middle;
  }

  .toolbar {
    display: flex;
    align-items: flex-start;
    height: 32px;
    padding: 4px 0 0 6px;
    box-sizing: border-box;
    border-top: 1px solid #a0a0a0;
    border-bottom: 1px solid #a0a0a0;
  }

  .group {
    display: flex;
    margin-right: 8px;
  }

  .group:has(+ .rule) {
    margin-right: 6px;
  }

  .rule {
    width: 2px;
    height: 29px;
    margin: -3px 6px 0 0;
    background: #a0a0a0;
    border-right: 1px solid #fff;
    box-sizing: border-box;
  }

  .tool {
    display: flex;
    flex-direction: column;
    align-items: center;
    justify-content: center;
    box-sizing: border-box;
    border: 1px solid;
    border-color: #fff #777 #777 #fff;
    box-shadow: inset -1px -1px #b0b0b0;
    background: #f0efee;
    white-space: pre;
    overflow: hidden;
  }

  .tool.pressed {
    border-color: #777 #fff #fff #777;
    box-shadow: inset 1px 1px #b0b0b0;
    background: #f8f8f8;
  }

  .square {
    width: 23px;
    height: 23px;
  }

  .study {
    width: 31px;
    height: 22px;
    font: 11px/10px 'Liberation Serif', serif;
  }

  .study .short {
    font-size: 13px;
  }

  .study.sans {
    font: 9px/9px 'Liberation Sans', sans-serif;
  }

  i {
    font-style: normal;
  }

  .b {
    color: #00f;
  }

  .r {
    color: #f00;
  }

  .period {
    font: bold 14px 'Liberation Sans', sans-serif;
  }

  .glyph {
    display: block;
    flex: none;
    width: 16px;
    height: 16px;
    overflow: visible;
  }

  .glyph.wide {
    width: 26px;
    height: 9px;
  }

  .body {
    display: flex;
    align-items: flex-start;
    flex: 1;
  }

  .left {
    display: flex;
    flex-direction: column;
    flex: none;
    width: 37px;
    height: 418px;
    padding: 7px 4px 0 3px;
    margin-top: 2px;
    box-sizing: border-box;
    border-top: 1px solid #a0a0a0;
    border-bottom: 1px solid #a0a0a0;
  }

  .side {
    width: 30px;
    height: 22px;
    flex: none;
    font: 7px/8px 'DejaVu Sans', sans-serif;
  }

  .side:last-child {
    margin-top: 5px;
  }

  .right {
    display: flex;
    flex-direction: column;
    gap: 5px;
    flex: none;
    width: 31px;
    height: 465px;
    padding: 7px 0 0 4px;
    box-sizing: border-box;
    border-top: 1px solid #a0a0a0;
    border-bottom: 1px solid #a0a0a0;
    border-left: 1px solid #fff;
  }

  .mini {
    width: 23px;
    height: 22px;
    font: 9px/8px 'Liberation Sans', sans-serif;
  }

  .mini .glyph.wide {
    height: 8px;
  }

  .mini.tiny {
    font-size: 7px;
  }

  .mini.bold {
    font: bold 11px 'Liberation Sans', sans-serif;
  }

  .mini.serif {
    font: bold 17px 'Liberation Serif', serif;
  }

  main {
    flex: 1;
    min-width: 0;
    padding: 1px 0;
    font: bold 16px 'Liberation Sans', sans-serif;
  }

  .quote {
    display: flex;
    align-items: center;
    height: 19px;
    margin: 0 0 4px 2px;
    padding: 0 6px 0 7px;
    background: #00f;
    color: #fff;
    white-space: nowrap;
  }

  .quote span {
    margin-right: 17px;
  }

  .quote .date {
    width: 643px;
  }

  .quote .high {
    margin-left: 26px;
  }

  .quote b {
    color: #f00;
  }

  .quote .change {
    margin-left: auto;
  }

  .pane {
    display: flex;
    align-items: flex-start;
    margin-bottom: 4px;
    padding-left: 1px;
    border-top: 2px solid #808080;
    border-left: 1px solid #808080;
    box-shadow: 0 2px #fff;
  }

  .plot {
    position: relative;
    flex: 1;
    min-width: 0;
  }

  .scale {
    position: relative;
    flex: none;
    width: 97px;
  }

  .pane svg:not(.glyph) {
    display: block;
    width: 100%;
    background: #000;
    fill: none;
    shape-rendering: crispEdges;
  }

  .pane .price {
    height: 598px;
  }

  .pane .study-plot {
    height: 288px;
  }

  .pane .study-scale {
    height: 308px;
  }

  .pane text {
    fill: #fff;
  }

  .flag {
    fill: #00f;
  }

  .dotted {
    stroke: #c0c0c0;
    stroke-dasharray: 1 3;
  }

  .dot {
    stroke: #c0c0c0;
  }

  .pane .mark {
    fill: #0f0;
    text-anchor: middle;
  }

  .mark.wave {
    text-decoration: underline;
    text-decoration-thickness: 2px;
  }

  .pane .mark.letter {
    fill: #f0f;
  }

  .legend {
    position: absolute;
    top: 0;
    left: 0;
    width: 113px;
    padding-left: 1px;
    background: #000;
    color: #fff;
    line-height: 19px;
    box-sizing: border-box;
    white-space: nowrap;
  }

  .legend span {
    display: inline-block;
    width: 31px;
  }

  /* the crosshair stays visible above the first row */
  .legend.narrow {
    width: 95px;
    padding-left: 0;
    background: linear-gradient(transparent 3px, #000 3px);
  }

  .narrow span {
    width: 40px;
  }

  .cyan {
    color: #0ff;
  }

  .yellow {
    color: #ff0;
  }

  .blue {
    color: #00f;
  }

  .green {
    color: #0f0;
  }

  .magenta {
    color: #f0f;
  }

  .tape {
    position: absolute;
    left: 313px;
    bottom: 0;
    display: flex;
    color: #808080;
    line-height: 18px;
  }

  .tape span {
    width: 96px;
  }

  .tape span:last-child {
    color: #fff;
  }

  .corner {
    position: absolute;
    right: 1px;
    bottom: 2px;
    width: 23px;
    height: 15px;
    padding-left: 3px;
    background: #c8c8c8;
    overflow: hidden;
  }

  .tabs {
    display: flex;
    height: 20px;
    font: 11px 'Liberation Sans', sans-serif;
    border-right: 1px solid #555;
  }

  .arrow {
    width: 21px;
    height: 20px;
  }

  .pane .arrow svg {
    width: 8px;
    height: 10px;
    background: none;
    fill: #000;
  }

  .tab {
    position: relative;
    z-index: 0;
    height: 20px;
    padding: 0 6px 6px 10px;
    white-space: nowrap;
  }

  .tab + .tab {
    margin-left: -6px;
  }

  /* two mirrored skewed halves make the trapezoid */
  .tab::before,
  .tab::after {
    content: '';
    position: absolute;
    z-index: -1;
    top: 0;
    bottom: 0;
    background: #f0f0f0;
    border-bottom: 1px solid #000;
  }

  .tab::before {
    left: 4px;
    right: 40%;
    border-left: 1px solid #000;
    transform: skewX(16deg);
  }

  .tab::after {
    left: 40%;
    right: 0;
    border-right: 1px solid #000;
    transform: skewX(-16deg);
  }

  .tab.active::before,
  .tab.active::after {
    background: #fff;
  }

  .tab.active {
    z-index: 1;
  }

  .pane.dates {
    margin-bottom: 0;
  }

  .pane .timeline {
    flex: 1;
    min-width: 0;
    height: 22px;
    box-sizing: border-box;
    border: 1px solid #c8c8c8;
    border-color: #fff #808080 #808080 #fff;
  }

  .filler {
    width: 97px;
    height: 22px;
    background: #00f;
  }

  footer {
    display: flex;
    justify-content: flex-end;
    height: 22px;
    box-sizing: border-box;
    padding-top: 3px;
    border-top: 1px solid #a0a0a0;
  }

  footer span {
    width: 483px;
    padding-left: 2px;
    border-top: 1px solid #a0a0a0;
    border-left: 1px solid #a0a0a0;
    line-height: 18px;
  }
</style>
